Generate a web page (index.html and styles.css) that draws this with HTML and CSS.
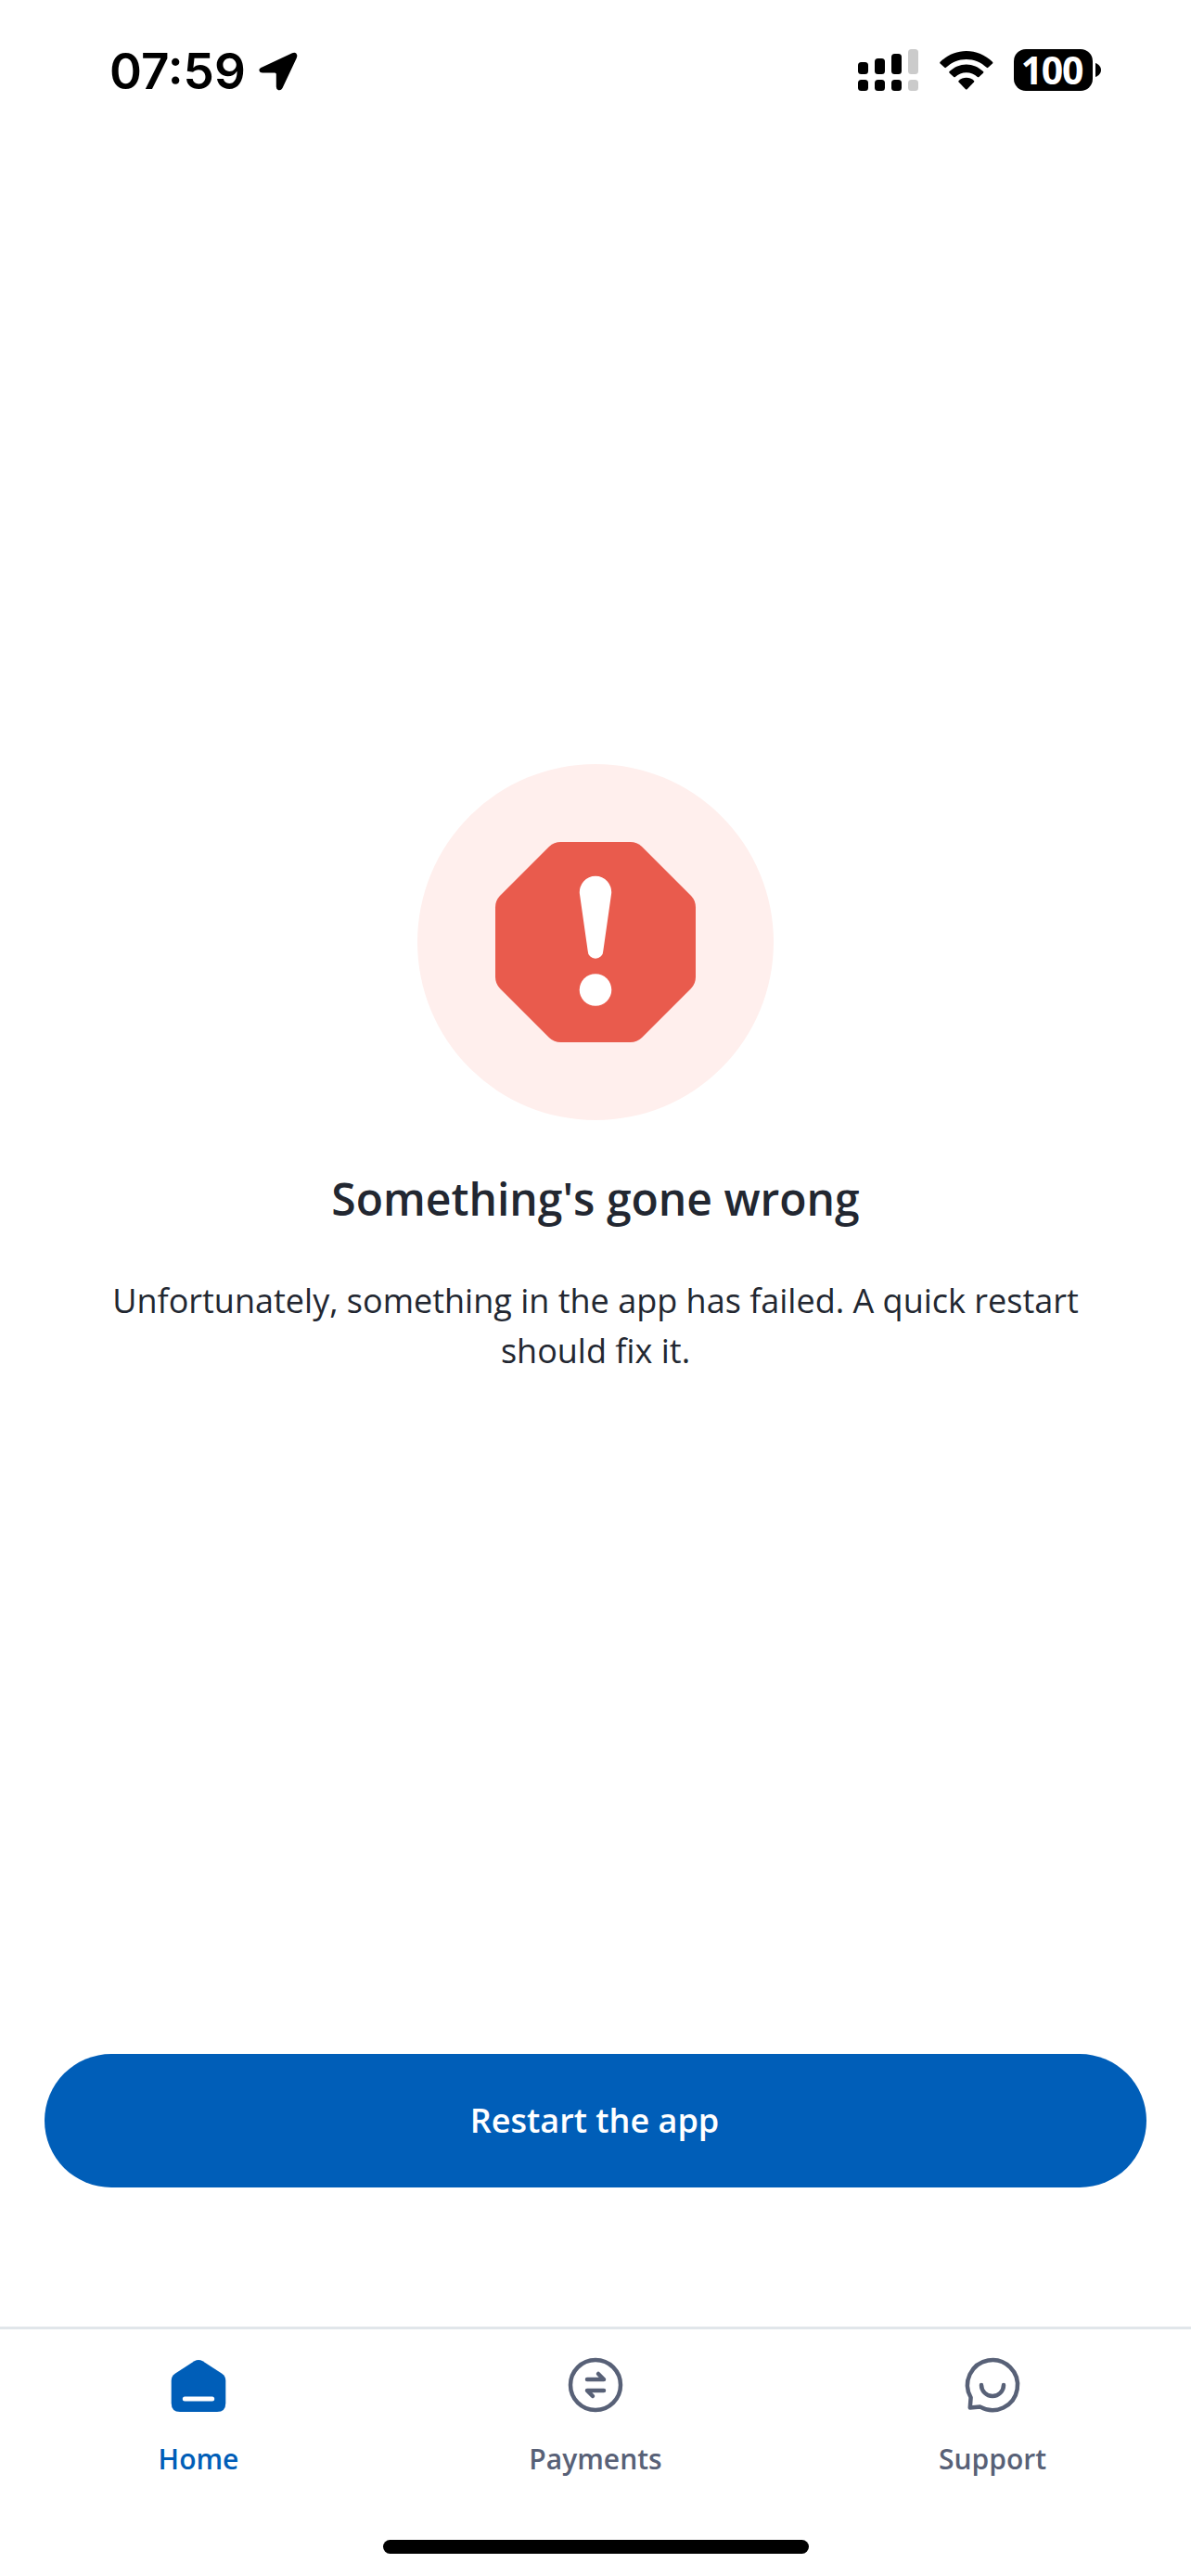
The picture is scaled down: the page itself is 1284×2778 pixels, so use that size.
FILE: index.html
```
<!DOCTYPE html>
<html lang="en">
<head>
    <meta charset="UTF-8">
    <meta name="viewport" content="width=device-width, initial-scale=1.0">
    <title>Something's gone wrong</title>
    <link rel="stylesheet" href="styles.css">
</head>
<body>
    <div class="app">
        <!-- Status bar -->
        <header class="status-bar">
            <div class="status-left">
                <span class="time">07:59</span>
                <svg class="location" width="42" height="42" viewBox="0 0 42 42">
                    <path d="M4 16.200 36 1.200Q39 0 40.500 1.800Q42 3.500 40.800 6.500L25.500 39Q24 41.800 21.200 41.200Q18.800 40.500 18.800 37.500V24Q18.800 22.500 17.300 22.500H4Q1 22.500.4 20Q0 17.800 4 16.200Z"/>
                </svg>
            </div>
            <div class="status-right">
                <svg class="signal" width="65" height="45" viewBox="0 0 65 45">
                    <rect x="0" y="14" width="11" height="13" rx="3.500"/>
                    <rect x="18" y="10" width="11" height="17" rx="3.500"/>
                    <rect x="36" y="5" width="11" height="22" rx="3.500"/>
                    <rect x="0" y="33" width="11" height="12" rx="3.500"/>
                    <rect x="18" y="33" width="11" height="12" rx="3.500"/>
                    <rect x="36" y="33" width="11" height="12" rx="3.500"/>
                    <rect class="dim" x="54" y="0" width="11" height="27" rx="3.500"/>
                    <rect class="dim" x="54" y="33" width="11" height="12" rx="3.500"/>
                </svg>
                <svg class="wifi" width="58" height="42" viewBox="0 0 58 42">
                    <path d="M.6 11.800C8.500 4.200 18.400 0 28.800 0S49.100 4.200 57 11.800Q57.800 12.600 57 13.500L52.300 17.800Q51.500 18.500 50.700 17.800C44.700 12.100 37 8.900 28.800 8.900S12.900 12.100 6.900 17.800Q6.100 18.500 5.300 17.800L.6 13.500Q-.2 12.600.6 11.800Z"/>
                    <path d="M10.600 22C15.600 17.200 22 14.400 28.800 14.400S42 17.200 47 22Q47.900 22.900 47 23.700L42.400 28Q41.600 28.600 40.800 28C37.500 25 33.300 23.300 28.800 23.300S20.100 25 16.800 28Q16 28.600 15.200 28L10.600 23.700Q9.700 22.900 10.600 22Z"/>
                    <path d="M20.600 32C22.900 30 25.700 28.800 28.800 28.800S34.700 30 37 32Q37.800 32.700 37 33.600L29.600 41.200Q28.800 42 28 41.200L20.600 33.600Q19.800 32.700 20.600 32Z"/>
                </svg>
                <div class="battery">
                    <span class="battery-level">100</span>
                    <svg class="battery-cap" width="6" height="15" viewBox="0 0 6 15">
                        <path d="M0 0C3.500 1.200 6 4 6 7.500S3.500 13.800 0 15Z"/>
                    </svg>
                </div>
            </div>
        </header>

        <!-- Error message -->
        <main class="error">
            <svg class="error-icon" width="384" height="384" viewBox="0 0 384 384">
                <circle cx="192" cy="192" r="192" fill="#ffefed"/>
                <path fill="#e95b4d" d="M154.500 84H229.500Q236.700 84 242 89L295 142Q300 147.300 300 154.500V229.500Q300 236.700 295 242L242 295Q236.700 300 229.500 300H154.500Q147.300 300 142 295L89 242Q84 236.700 84 229.500V154.500Q84 147.300 89 142L142 89Q147.300 84 154.500 84Z"/>
                <path fill="#fff" d="M174.900 139.800A17.200 17.200 0 1 1 209.100 139.800L200.300 201.500A8.300 8.300 0 0 1 183.700 201.500Z"/>
                <circle cx="192" cy="243.500" r="17.300" fill="#fff"/>
            </svg>
            <h1 class="error-title">Something's gone wrong</h1>
            <p class="error-text">Unfortunately, something in the app has failed. A quick restart should fix it.</p>
        </main>

        <div class="actions">
            <button type="button" class="btn">Restart the app</button>
        </div>

        <!-- Bottom navigation -->
        <nav class="tab-bar">
            <a class="tab active">
                <svg width="72" height="72" viewBox="0 0 72 72">
                    <path fill="currentColor" d="M31.500 8.300Q36 5.600 40.500 8.300L61.300 21.800Q65.300 24.500 65.300 29.500V53.500Q65.300 63 56 63H16Q6.700 63 6.700 53.500V29.500Q6.700 24.500 10.700 21.800Z"/>
                    <path stroke="#fff" stroke-width="5" stroke-linecap="round" d="M21.300 49H50.700"/>
                </svg>
                <span class="tab-label">Home</span>
            </a>
            <a class="tab">
                <svg width="72" height="72" viewBox="0 0 72 72" fill="none" stroke="currentColor" stroke-width="4.500" stroke-linecap="round" stroke-linejoin="round">
                    <circle cx="36" cy="34" r="27"/>
                    <path d="M27 28H45L39 22M45 40H27L33 46"/>
                </svg>
                <span class="tab-label">Payments</span>
            </a>
            <a class="tab">
                <svg width="72" height="72" viewBox="0 0 72 72" fill="none" stroke="currentColor" stroke-width="4.500" stroke-linecap="round" stroke-linejoin="round">
                    <path d="M12.600 47.500A27 27 0 1 1 22.800 57.600L11.800 58.500Z"/>
                    <path d="M24 34A12 12 0 0 0 48 34"/>
                </svg>
                <span class="tab-label">Support</span>
            </a>
        </nav>
        <div class="home-indicator"></div>
    </div>
</body>
</html>
```

FILE: styles.css
```
body {
    margin: 0;
    background-color: #fff;
    font-family: "Open Sans", "Noto Sans", sans-serif;
    color: #222731;
}
svg {
    display: block;
    flex-shrink: 0;
}
.app {
    display: flex;
    flex-direction: column;
    box-sizing: border-box;
    width: 1284px;
    height: 2778px;
    overflow: hidden;
}
.status-bar {
    display: flex;
    justify-content: space-between;
    align-items: center;
    box-sizing: border-box;
    height: 151px;
    padding: 0 97px 0 118px;
    color: #000;
}
.status-left,
.status-right {
    display: flex;
    align-items: center;
}
.status-left {
    gap: 14px;
}
.time {
    width: 147px;
    padding-top: 3px;
    font-family: Inter, "Liberation Sans", sans-serif;
    font-size: 53px;
    font-weight: 600;
    line-height: 60px;
    letter-spacing: 0;
    white-space: nowrap;
}
.location {
    margin-top: 3px;
}
.signal {
    margin-right: 23px;
}
.signal .dim {
    fill: #cbcbcb;
}
.wifi {
    margin-right: 22px;
}
.battery {
    display: flex;
    align-items: center;
    gap: 3px;
}
.battery-level {
    box-sizing: border-box;
    width: 85px;
    height: 45px;
    padding-right: 3px;
    border-radius: 13px;
    background-color: #000;
    color: #fff;
    font-size: 41px;
    font-weight: 700;
    line-height: 45px;
    letter-spacing: -1.2px;
    text-align: center;
}
.error {
    display: flex;
    flex-direction: column;
    align-items: center;
    flex: 1;
    padding: 673px 96px 0;
    text-align: center;
}
.error-title {
    margin: 49px 0 47px;
    font-size: 48px;
    font-weight: 600;
    line-height: 72px;
}
.error-text {
    margin: 0;
    font-size: 36px;
    line-height: 54px;
}
.actions {
    padding: 0 48px 150px;
}
.btn {
    display: block;
    width: 100%;
    height: 144px;
    padding: 0 2px 2px 0;
    border: none;
    border-radius: 72px;
    background-color: #005eb8;
    color: #fff;
    font-family: inherit;
    font-size: 36px;
    font-weight: 600;
    cursor: pointer;
}
.tab-bar {
    display: flex;
    height: 200px;
    border-top: 3px solid #e1e6ea;
}
.tab {
    display: flex;
    flex: 1;
    flex-direction: column;
    align-items: center;
    padding-top: 26px;
    color: #586177;
}
.tab.active {
    color: #005eb8;
}
.tab-label {
    margin-top: 22px;
    font-size: 30px;
    font-weight: 600;
    line-height: 40px;
}
.home-indicator {
    width: 459px;
    height: 15px;
    margin: 27px auto 24px;
    border-radius: 8px;
    background-color: #000;
}
```
